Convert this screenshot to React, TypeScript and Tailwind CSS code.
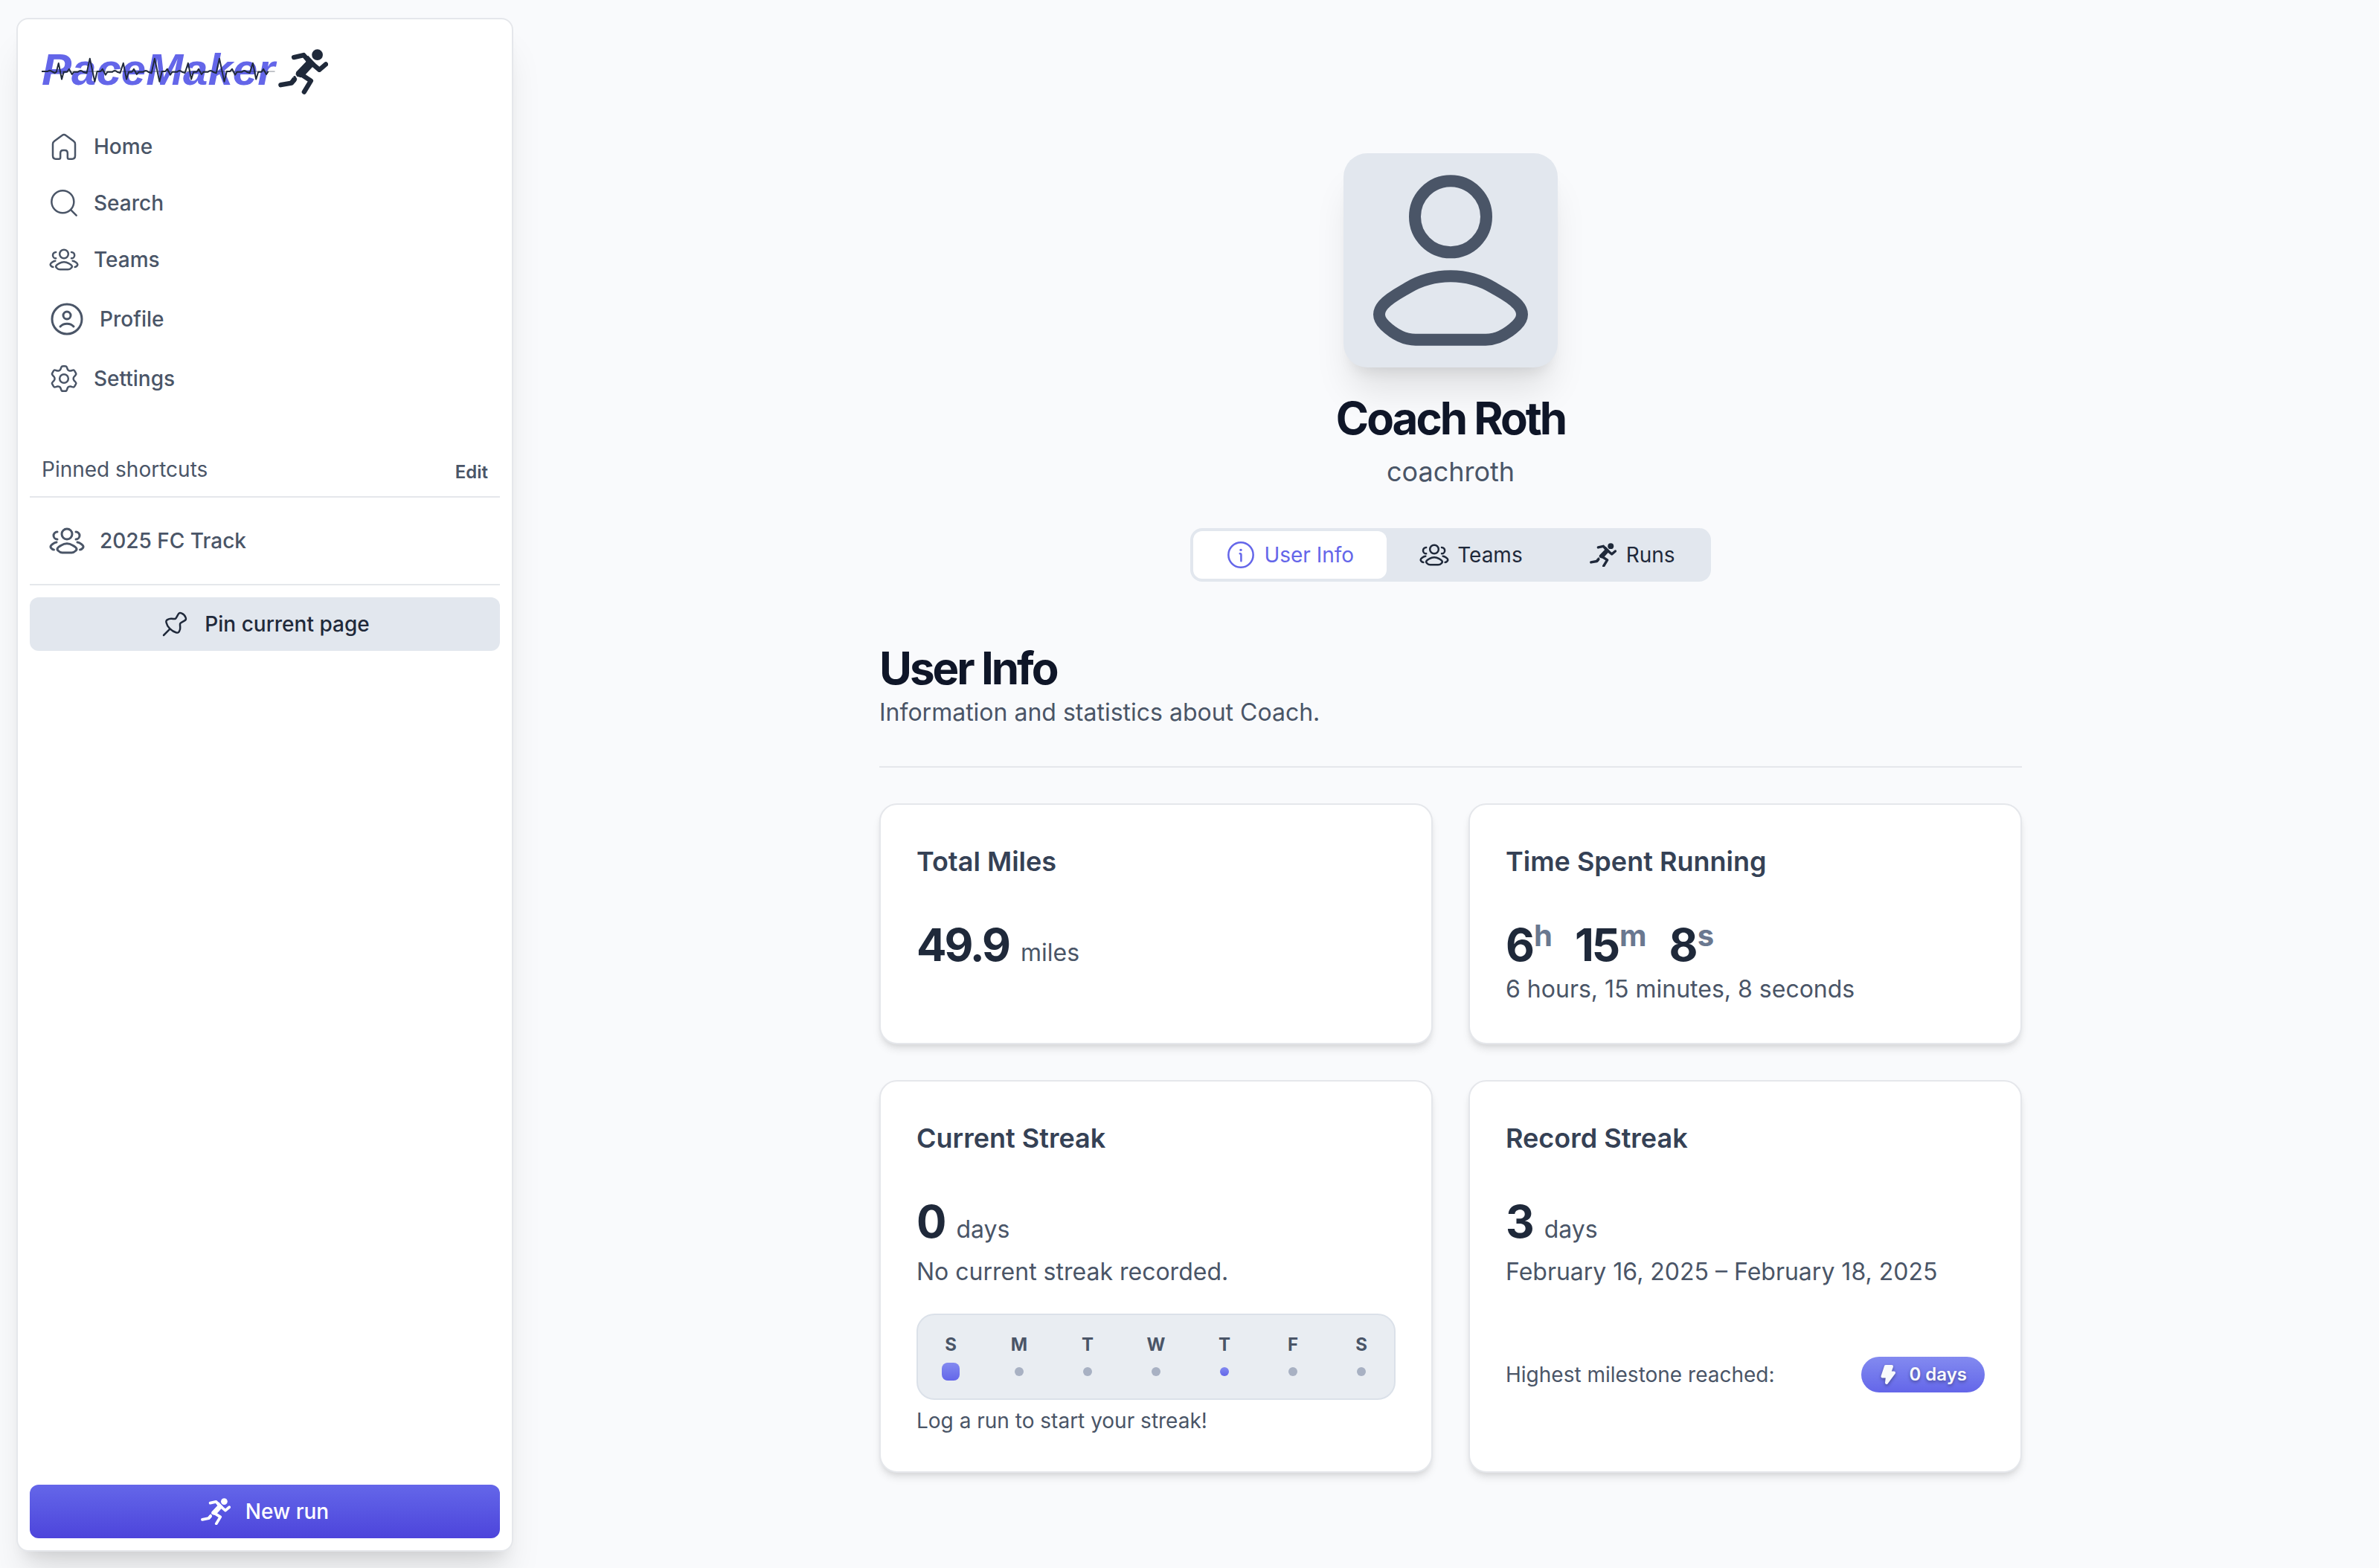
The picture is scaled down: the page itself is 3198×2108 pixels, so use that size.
import React from "react";

type IconProps = { className?: string };

function StrokeIcon({ className, children }: IconProps & { children: React.ReactNode }) {
  return (
    <svg
      className={className}
      viewBox="0 0 24 24"
      fill="none"
      stroke="currentColor"
      strokeWidth="1.5"
      strokeLinecap="round"
      strokeLinejoin="round"
      overflow="visible"
      aria-hidden="true"
    >
      {children}
    </svg>
  );
}

function HomeIcon({ className }: IconProps) {
  return (
    <StrokeIcon className={className}>
      <path d="M10.5 3L4.2 7.7C3.4 8.3 3 9 3 9.9V19.4C3 21.1 3.9 22 5.4 22H7.9C8.7 22 9.1 21.6 9.1 20.8V17.4C9.1 15.9 10 15 11.4 15H12.6C14 15 14.9 15.9 14.9 17.4V20.8C14.9 21.6 15.3 22 16.1 22H18.6C20.1 22 21 21.1 21 19.4V9.9C21 9 20.6 8.3 19.8 7.7L13.5 3C12.5 2.2 11.5 2.2 10.5 3Z" />
    </StrokeIcon>
  );
}

function SearchIcon({ className }: IconProps) {
  return (
    <StrokeIcon className={className}>
      <path d="M17.5 17.5L22 22" />
      <circle cx="11" cy="11" r="9" />
    </StrokeIcon>
  );
}

function GroupIcon({ className }: IconProps) {
  return (
    <StrokeIcon className={className}>
      <path d="M20.774 18C21.5233 18 22.1193 17.5285 22.6545 16.8691C23.7499 15.5194 21.9513 14.4408 21.2654 13.9126C20.568 13.3756 19.7894 13.0714 19 13M18 11C19.3807 11 20.5 9.88071 20.5 8.5C20.5 7.11929 19.3807 6 18 6" />
      <path d="M3.22596 18C2.47666 18 1.88067 17.5285 1.34555 16.8691C0.250087 15.5194 2.04867 14.4408 2.73465 13.9126C3.43197 13.3756 4.21058 13.0714 5 13M5.5 11C4.11929 11 3 9.88071 3 8.5C3 7.11929 4.11929 6 5.5 6" />
      <path d="M8.0838 15.1112C7.06203 15.743 4.38299 17.0331 6.0147 18.6474C6.81178 19.436 7.69952 20 8.81563 20H15.1844C16.3005 20 17.1882 19.436 17.9853 18.6474C19.617 17.0331 16.938 15.743 15.9162 15.1112C13.5201 13.6296 10.4799 13.6296 8.0838 15.1112Z" />
      <circle cx="12" cy="7.5" r="3.5" />
    </StrokeIcon>
  );
}

function ProfileIcon({ className }: IconProps) {
  return (
    <StrokeIcon className={className}>
      <circle cx="12" cy="12" r="10" />
      <path d="M7.5 17C9.8317 14.5578 14.1432 14.4428 16.5 17" />
      <circle cx="12" cy="9.5" r="2.5" />
    </StrokeIcon>
  );
}

function SettingsIcon({ className }: IconProps) {
  return (
    <StrokeIcon className={className}>
      <circle cx="12" cy="12" r="3.5" />
      <path d="M21.3175 7.14139L20.8239 6.28479C20.4506 5.63696 20.264 5.31305 19.9464 5.18388C19.6288 5.05472 19.2696 5.15664 18.5513 5.36048L17.3311 5.70418C16.8725 5.80994 16.3913 5.74994 15.9726 5.53479L15.6357 5.34042C15.2766 5.11043 15.0004 4.77133 14.8475 4.37274L14.5136 3.37536C14.294 2.71534 14.1842 2.38533 13.9228 2.19657C13.6615 2.00781 13.3143 2.00781 12.6199 2.00781H11.5051C10.8108 2.00781 10.4636 2.00781 10.2022 2.19657C9.94085 2.38533 9.83106 2.71534 9.61149 3.37536L9.27753 4.37274C9.12465 4.77133 8.84845 5.11043 8.48937 5.34042L8.15249 5.53479C7.73374 5.74994 7.25259 5.80994 6.79398 5.70418L5.57375 5.36048C4.85541 5.15664 4.49625 5.05472 4.17867 5.18388C3.86109 5.31305 3.67445 5.63696 3.30115 6.28479L2.80757 7.14139C2.45766 7.74864 2.2827 8.05227 2.31666 8.37549C2.35061 8.69871 2.58483 8.95918 3.05326 9.48012L4.0843 10.6328C4.3363 10.9518 4.51521 11.5078 4.51521 12.0077C4.51521 12.5078 4.33636 13.0636 4.08433 13.3827L3.05326 14.5354C2.58483 15.0564 2.35062 15.3168 2.31666 15.6401C2.2827 15.9633 2.45766 16.2669 2.80757 16.8741L3.30114 17.7307C3.67443 18.3785 3.86109 18.7025 4.17867 18.8316C4.49625 18.9608 4.85542 18.8589 5.57377 18.655L6.79394 18.3113C7.25263 18.2055 7.73387 18.2656 8.15267 18.4808L8.4895 18.6752C8.84851 18.9052 9.12464 19.2442 9.2775 19.6428L9.61149 20.6403C9.83106 21.3003 9.94085 21.6303 10.2022 21.8191C10.4636 22.0078 10.8108 22.0078 11.5051 22.0078H12.6199C13.3143 22.0078 13.6615 22.0078 13.9228 21.8191C14.1842 21.6303 14.294 21.3003 14.5136 20.6403L14.8476 19.6428C15.0004 19.2442 15.2765 18.9052 15.6356 18.6752L15.9724 18.4808C16.3912 18.2656 16.8724 18.2055 17.3311 18.3113L18.5513 18.655C19.2696 18.8589 19.6288 18.9608 19.9464 18.8316C20.264 18.7025 20.4506 18.3785 20.8239 17.7307L21.3175 16.8741C21.6674 16.2669 21.8423 15.9633 21.8084 15.6401C21.7744 15.3168 21.5402 15.0564 21.0718 14.5354L20.0407 13.3827C19.7887 13.0636 19.6098 12.5078 19.6098 12.0077C19.6098 11.5078 19.7888 10.9518 20.0407 10.6328L21.0718 9.48012C21.5402 8.95918 21.7744 8.69871 21.8084 8.37549C21.8423 8.05227 21.6674 7.74864 21.3175 7.14139Z" />
    </StrokeIcon>
  );
}

function PinIcon({ className }: IconProps) {
  return (
    <StrokeIcon className={className}>
      <path d="M3 21L8 16" />
      <path d="M13.2585 18.8714C9.51516 18.0215 5.97844 14.4848 5.12853 10.7415C4.99399 10.1489 4.92672 9.85266 5.12161 9.37197C5.3165 8.89129 5.55457 8.74255 6.03071 8.44509C7.10705 7.77265 8.27254 7.55888 9.48209 7.66586C11.1793 7.81598 12.0279 7.89104 12.4512 7.67048C12.8746 7.44991 13.1622 6.93417 13.7376 5.90269L14.4664 4.59604C14.9465 3.73528 15.1866 3.3049 15.7513 3.10202C16.316 2.89913 16.6558 3.02199 17.3355 3.26771C18.9249 3.84236 20.1576 5.07505 20.7323 6.66449C20.978 7.34417 21.1009 7.68401 20.898 8.2487C20.6951 8.8134 20.2647 9.05346 19.4039 9.53358L18.0672 10.2792C17.0376 10.8534 16.5229 11.1406 16.3024 11.568C16.0819 11.9955 16.162 12.8256 16.3221 14.4859C16.4399 15.7068 16.2369 16.88 15.5555 17.9697C15.2577 18.4458 15.1088 18.6839 14.6283 18.8786C14.1477 19.0733 13.8513 19.006 13.2585 18.8714Z" />
    </StrokeIcon>
  );
}

function InfoIcon({ className }: IconProps) {
  return (
    <StrokeIcon className={className}>
      <circle cx="12" cy="12" r="10" />
      <path d="M12.2422 17V12C12.2422 11.5286 12.2422 11.2929 12.0957 11.1464C11.9493 11 11.7136 11 11.2422 11" />
      <path d="M11.992 8H12.001" strokeWidth="2" />
    </StrokeIcon>
  );
}

function UserIcon({ className }: IconProps) {
  return (
    <StrokeIcon className={className}>
      <path d="M6.57757 15.4816C5.1628 16.324 1.45336 18.0441 3.71266 20.1966C4.81631 21.248 6.04549 22 7.59087 22H16.4091C17.9545 22 19.1837 21.248 20.2873 20.1966C22.5466 18.0441 18.8372 16.324 17.4224 15.4816C14.1048 13.5061 9.89519 13.5061 6.57757 15.4816Z" />
      <circle cx="12" cy="6.5" r="4.5" />
    </StrokeIcon>
  );
}

function RunnerIcon({ className }: IconProps) {
  return (
    <svg className={className} viewBox="0 0 200 182" fill="none" stroke="currentColor" strokeWidth="19" strokeLinecap="round" strokeLinejoin="round" aria-hidden="true">
      <circle cx="157" cy="23" r="22" fill="currentColor" stroke="none" />
      <path d="M63 33L102 24L121 46" />
      <path d="M128 52L165 83L191 61" />
      <path d="M108 34L120 26L150 58L108 104L90 114L70 102L72 92L112 50Z" fill="currentColor" stroke="none" />
      <path d="M82 102L96 104L131 127L104 172" />
      <path d="M10 144L53 136L64 124" />
      <path d="M53 136L66 118" strokeLinecap="butt" />
      <path d="M60 110L68 107L76 120L68 128Z" fill="currentColor" stroke="none" />
    </svg>
  );
}

function BoltIcon({ className }: IconProps) {
  return (
    <svg className={className} viewBox="0 0 28 28" fill="currentColor" stroke="currentColor" strokeWidth="4" strokeLinejoin="round" aria-hidden="true">
      <path d="M9 3H17L14 11.5H20L10 25L11 16.5H4.5Z" />
    </svg>
  );
}

const BEATS =
  "M168 288H192Q201 280 210 288L222 295L228 290L237 254L250 320L258 290H272L280 278L292 300L300 290H316Q328 280 338 290L352 295L365 235L385 330L395 288H408L417 278L429 302L437 290H457Q467 280 477 290L489 294L502 254L515 320L524 290H537L545 278L557 300L565 290H583Q594 280 604 290L617 295L630 235L650 330L660 288H673L682 278L694 302L702 290H722Q732 280 742 290L754 294L767 254L780 320L789 290H802L810 278L822 300L830 290H848Q859 280 869 290L882 295L895 235L915 330L925 288H938L947 278L959 302L967 290H987Q997 280 1007 290L1019 294L1032 254L1045 320L1054 290H1067L1075 278L1087 300L1095 288";

function Logo() {
  return (
    <a href="#home" aria-label="PaceMaker home" className="flex items-start gap-1 px-4 pt-6">
      <span className="relative font-['Liberation_Sans',sans-serif] text-6xl leading-[55px] font-bold text-[#6466e9] italic">
        PaceMaker
        <svg className="absolute top-[11px] left-0 w-full overflow-visible" viewBox="168 230 954 104" fill="none" stroke="#1f293a" aria-hidden="true">
          <path d="M168 288H1122" strokeWidth="3" opacity="0.55" />
          <path d={BEATS} strokeWidth="6" strokeLinejoin="round" />
        </svg>
      </span>
      <RunnerIcon className="w-[67px] text-[#1f293a]" />
    </a>
  );
}

const NAV = [
  { label: "Home", icon: <HomeIcon className="size-10" /> },
  { label: "Search", icon: <SearchIcon className="size-10" /> },
  { label: "Teams", icon: <GroupIcon className="size-10" /> },
  { label: "Profile", icon: <ProfileIcon className="size-12" /> },
  { label: "Settings", icon: <SettingsIcon className="size-10" /> },
];

function NavLink({ label, icon }: { label: string; icon: React.ReactNode }) {
  return (
    <a href={"#" + label.toLowerCase().replace(/ /g, "-")} className="flex items-center gap-5 px-[26px] py-4 text-[28px] leading-10 font-medium">
      {icon}
      {label}
    </a>
  );
}

function Sidebar() {
  return (
    <aside className="flex w-[702px] shrink-0 flex-col pt-6 pr-3 pb-[22px] pl-[22px]">
      <div className="flex grow flex-col rounded-2xl border-2 border-[#e5e7eb] bg-white p-4 shadow-[0_40px_50px_-10px_rgba(0,0,0,0.1),0_16px_20px_-12px_rgba(0,0,0,0.1)]">
        <Logo />
        <nav aria-label="Main" className="mt-[34px] flex flex-col gap-1">
          {NAV.map((item) => (
            <NavLink key={item.label} label={item.label} icon={item.icon} />
          ))}
        </nav>
        <section className="mt-[66px]" aria-label="Pinned shortcuts">
          <div className="flex items-end justify-between border-b-2 border-[#e5e7eb] px-4 pb-4">
            <h2 className="text-[28px] leading-10">Pinned shortcuts</h2>
            <button type="button" className="text-2xl leading-8 font-semibold">
              Edit
            </button>
          </div>
          <div className="border-b-2 border-[#e5e7eb] py-[18px]">
            <NavLink label="2025 FC Track" icon={<GroupIcon className="size-12" />} />
          </div>
          <button type="button" className="mt-4 flex h-[72px] w-full items-center justify-center gap-5 rounded-xl bg-[#e2e7ee] text-[28px] leading-10 font-medium text-[#1f293a]">
            <PinIcon className="size-10" />
            Pin current page
          </button>
        </section>
        <button type="button" className="mt-auto flex h-[72px] w-full items-center justify-center gap-5 rounded-xl bg-linear-to-b from-[#6466e9] to-[#4d44db] text-[28px] leading-10 font-medium text-white">
          <RunnerIcon className="w-10" />
          New run
        </button>
      </div>
    </aside>
  );
}

function Card({ title, children }: { title: string; children: React.ReactNode }) {
  return (
    <section className="flex flex-col rounded-3xl border-2 border-[#e5e7eb] bg-white p-12 shadow-[0_8px_12px_-2px_rgba(0,0,0,0.1),0_4px_8px_-4px_rgba(0,0,0,0.1)]">
      <h3 className="mb-12 text-4xl leading-14 font-semibold text-[#354155]">{title}</h3>
      {children}
    </section>
  );
}

function Stat({ value, unit }: { value: string; unit: string }) {
  return (
    <p className="flex items-baseline gap-4 text-[32px]">
      <span className="text-6xl leading-[72px] font-bold tracking-tighter text-[#1f293a]">{value}</span>
      {unit}
    </p>
  );
}

const DURATION = [
  ["6", "h"],
  ["15", "m"],
  ["8", "s"],
];

const WEEK = [
  { day: "S", mark: "size-6 rounded-lg bg-linear-to-b from-[#838af0] to-[#6466e9]" },
  { day: "M", mark: "size-3 rounded-full bg-[#a8b1c3]" },
  { day: "T", mark: "size-3 rounded-full bg-[#a8b1c3]" },
  { day: "W", mark: "size-3 rounded-full bg-[#a8b1c3]" },
  { day: "T", mark: "size-3 rounded-full bg-linear-to-b from-[#838af0] to-[#6466e9]" },
  { day: "F", mark: "size-3 rounded-full bg-[#a8b1c3]" },
  { day: "S", mark: "size-3 rounded-full bg-[#a8b1c3]" },
];

const TABS = [
  { label: "User Info", icon: <InfoIcon className="size-10" />, active: true },
  { label: "Teams", icon: <GroupIcon className="size-10" />, active: false },
  {
    label: "Runs",
    icon: (
      <span className="flex w-10 justify-center">
        <RunnerIcon className="w-9" />
      </span>
    ),
    active: false,
  },
];

export default function App() {
  return (
    <div className="flex min-h-screen bg-[#f9fafc] font-['Inter',sans-serif] text-[#4a5567]">
      <Sidebar />
      <main className="flex grow flex-col items-center pt-[206px] pb-24">
        <div className="flex size-72 items-center justify-center rounded-4xl bg-[#e2e7ee] shadow-[0_40px_50px_-10px_rgba(0,0,0,0.1),0_16px_20px_-12px_rgba(0,0,0,0.1)]">
          <UserIcon className="size-64" />
        </div>
        <h1 className="mt-8 text-6xl leading-[72px] font-bold tracking-tighter text-[#0f1628]">Coach Roth</h1>
        <p className="mt-2 text-4xl leading-14">coachroth</p>

        <div role="tablist" className="mt-12 flex rounded-2xl bg-[#e2e7ee] p-1 text-[28px] leading-10 text-[#1f293a]">
          {TABS.map((tab) => (
            <button
              key={tab.label}
              type="button"
              role="tab"
              aria-selected={tab.active}
              className={
                tab.active
                  ? "flex h-16 items-center gap-[11px] rounded-xl bg-white px-11 text-[#6466e9]"
                  : "flex h-16 items-center gap-[11px] rounded-xl px-11"
              }
            >
              {tab.icon}
              {tab.label}
            </button>
          ))}
        </div>

        <div className="mt-20 w-full max-w-[1536px]">
          <header className="border-b-2 border-[#e5e7eb] pb-12">
            <h2 className="text-6xl leading-[72px] font-bold tracking-tighter text-[#0f1628]">User Info</h2>
            <p className="text-[32px] leading-12">Information and statistics about Coach.</p>
          </header>

          <div className="mt-12 grid grid-cols-2 gap-12">
            <Card title="Total Miles">
              <Stat value="49.9" unit="miles" />
            </Card>

            <Card title="Time Spent Running">
              <p className="flex gap-[30px] text-6xl leading-[72px] font-bold tracking-tighter text-[#1f293a]">
                {DURATION.map(([value, unit]) => (
                  <span key={unit} className="flex gap-0.5">
                    {value}
                    <span className="text-[40px] leading-12 tracking-normal text-[#6a7890]">{unit}</span>
                  </span>
                ))}
              </p>
              <p className="text-[32px] leading-12">6 hours, 15 minutes, 8 seconds</p>
            </Card>

            <Card title="Current Streak">
              <Stat value="0" unit="days" />
              <p className="mt-2 text-[32px] leading-12">No current streak recorded.</p>
              <div className="mt-8 flex justify-between rounded-3xl border-2 border-[#dbe1e9] bg-[#e9edf2] p-6">
                {WEEK.map(({ day, mark }, i) => (
                  <div key={i} className="flex w-10 flex-col items-center gap-2">
                    <span className="text-2xl leading-8 font-bold">{day}</span>
                    <span className="flex h-6 items-center">
                      <span className={mark} />
                    </span>
                  </div>
                ))}
              </div>
              <p className="mt-2 text-[28px] leading-10">Log a run to start your streak!</p>
            </Card>

            <Card title="Record Streak">
              <Stat value="3" unit="days" />
              <p className="mt-2 text-[32px] leading-12">February 16, 2025 – February 18, 2025</p>
              <div className="mt-8 flex grow items-center justify-between text-[28px] leading-10">
                Highest milestone reached:
                <span className="flex h-12 items-center gap-3 rounded-full bg-linear-to-b from-[#838af0] to-[#6466e9] px-6 text-2xl leading-8 font-semibold text-[#f8fafc] text-shadow-[0_2px_4px_rgba(0,0,0,0.35)]">
                  <BoltIcon className="size-7 drop-shadow-[0_2px_2px_rgba(0,0,0,0.35)]" />
                  0 days
                </span>
              </div>
            </Card>
          </div>
        </div>
      </main>
    </div>
  );
}
